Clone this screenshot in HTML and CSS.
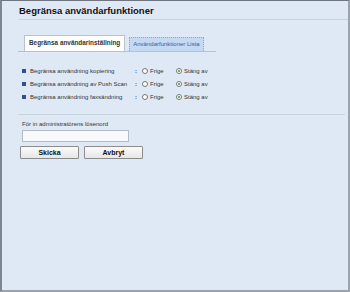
FILE: index.html
```html
<!DOCTYPE html>
<html lang="sv">
  <head>
    <title>Begränsa användarfunktioner</title>
    <link rel="stylesheet" href="styles.css">
  </head>
  <body>
    <div class="frame">
      <h1 class="title">Begränsa användarfunktioner</h1>

      <div class="tabs">
        <span class="tab active">Begränsa användarinställning</span>
        <span class="tab">Användarfunktioner Lista</span>
      </div>

      <div class="rows">
        <div class="row">
          <span class="bullet"></span>
          <span class="label">Begränsa användning kopiering</span>
          <span class="colon">:</span>
          <span class="radio"></span><span class="opt">Frige</span>
          <span class="radio on"></span><span class="opt">Stäng av</span>
        </div>
        <div class="row">
          <span class="bullet"></span>
          <span class="label">Begränsa användning av Push Scan</span>
          <span class="colon">:</span>
          <span class="radio"></span><span class="opt">Frige</span>
          <span class="radio on"></span><span class="opt">Stäng av</span>
        </div>
        <div class="row">
          <span class="bullet"></span>
          <span class="label">Begränsa användning faxsändning</span>
          <span class="colon">:</span>
          <span class="radio"></span><span class="opt">Frige</span>
          <span class="radio on"></span><span class="opt">Stäng av</span>
        </div>
      </div>

      <div class="password">
        <label for="pw">För in administratörens lösenord</label>
        <input type="password" id="pw">
      </div>

      <div class="buttons">
        <button>Skicka</button>
        <button>Avbryt</button>
      </div>
    </div>
  </body>
</html>
```

FILE: styles.css
```css
body {
  margin: 0;
  padding: 0;
  font-family: "Liberation Sans", Arial, sans-serif;
  color: #222;
  background-color: #dfe9f5;
}

.frame {
  box-sizing: border-box;
  height: 292px;
  border-top: 1px solid #6f7580;
  border-left: 2px solid #7d8590;
  border-right: 2px solid #9aa2ad;
  border-bottom: 2px solid #9aa2ad;
  padding: 0 0 0 16px;
}

.title {
  margin: 0;
  padding: 4px 0 3px 1px;
  font-size: 9.5px;
  font-weight: bold;
  color: #111;
  border-bottom: 1px solid #c8d3e0;
}

.tabs {
  display: flex;
  align-items: flex-end;
  gap: 4px;
  width: 192px;
  margin-top: 15px;
  padding-left: 6px;
  border-bottom: 1px solid #b9c2cc;
}

.tab {
  font-size: 6.4px;
  padding: 3px 4px 3px;
  border: 1px solid #b9c2cc;
  border-bottom: none;
}

.tab.active {
  background: #fff;
  font-weight: bold;
  color: #333;
  padding-bottom: 5px;
}

.tab:not(.active) {
  font-size: 6px;
  background: #c5daf2;
  color: #3a5b9c;
  border: 1px dotted #8aa6cc;
  border-bottom: none;
  padding: 3px 3px 4px;
}

.rows {
  margin-top: 12px;
  padding-left: 4px;
  padding-bottom: 11px;
  border-bottom: 1px solid #c8d3e0;
  margin-right: 3px;
}

.row {
  display: flex;
  align-items: center;
  height: 13px;
  font-size: 6px;
  color: #333;
}

.bullet {
  width: 4px;
  height: 4px;
  background: #3b4f86;
  margin-right: 4px;
}

.label {
  width: 105px;
}

.colon {
  width: 7px;
  font-weight: bold;
}

.radio {
  box-sizing: border-box;
  width: 6px;
  height: 6px;
  border: 1px solid #777;
  border-radius: 50%;
  background: #fff;
  margin-right: 2px;
  position: relative;
}

.radio.on::after {
  content: "";
  position: absolute;
  left: 1px;
  top: 1px;
  width: 2px;
  height: 2px;
  border-radius: 50%;
  background: #2a9a3a;
}

.opt {
  width: 26px;
}

.password {
  padding: 6px 0 0 4px;
}

.password label {
  display: block;
  font-size: 6px;
  color: #333;
  margin-bottom: 3px;
}

.password input {
  display: block;
  box-sizing: border-box;
  width: 107px;
  height: 12px;
  border: 1px solid #b4bcc6;
  background: #f8f9fb;
  padding: 0;
  margin: 0;
}

.buttons {
  display: flex;
  gap: 5px;
  margin-top: 4px;
  padding-left: 2px;
}

.buttons button {
  box-sizing: border-box;
  width: 59px;
  height: 13px;
  padding: 0;
  font-family: "Liberation Sans", Arial, sans-serif;
  font-size: 7px;
  font-weight: bold;
  color: #111;
  background: linear-gradient(#fbfbfb, #e6e6e6);
  border: 1px solid #8c8c8c;
  border-radius: 1px;
}
```
